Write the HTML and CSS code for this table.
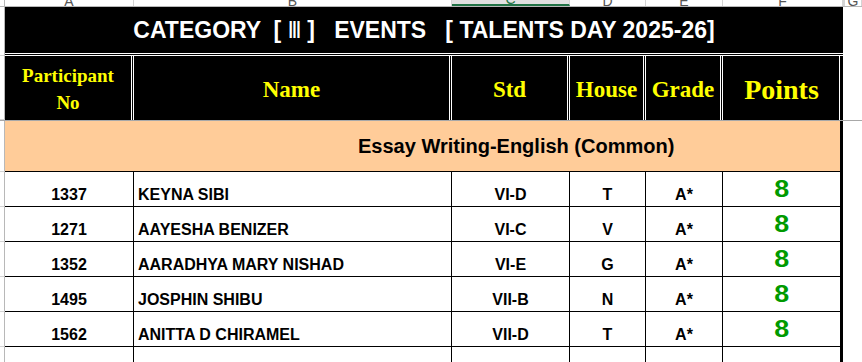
FILE: index.html
```html
<!DOCTYPE html>
<html>
<head>
<meta charset="utf-8">
<link rel="stylesheet" href="styles.css">
</head>
<body>
<div class="sheet">
  <div class="colbar">
    <div class="ch corner"></div>
    <div class="ch"><span>A</span></div>
    <div class="ch"><span>B</span></div>
    <div class="ch sel"><span>C</span></div>
    <div class="ch"><span>D</span></div>
    <div class="ch"><span>E</span></div>
    <div class="ch"><span>F</span></div>
    <div class="ch last"><span>G</span></div>
  </div>

  <div class="row title-row">
    <div class="rh"></div>
    <div class="title">CATEGORY  [ <span class="roman">III</span> ]   EVENTS   [ TALENTS DAY 2025-26]</div>
    <div class="fill"></div>
  </div>

  <div class="row hdr-row">
    <div class="rh"></div>
    <div class="hc hc-part"><span>Participant<br>No</span></div>
    <div class="hc">Name</div>
    <div class="hc">Std</div>
    <div class="hc">House</div>
    <div class="hc">Grade</div>
    <div class="hc hc-points">Points</div>
    <div class="fill"></div>
  </div>

  <div class="row event-row">
    <div class="rh"></div>
    <div class="event">Essay Writing-English (Common)</div>
    <div class="fill"></div>
  </div>

  <div class="row data-row">
    <div class="rh"></div>
    <div class="dc num">1337</div>
    <div class="dc name">KEYNA SIBI</div>
    <div class="dc">VI-D</div>
    <div class="dc">T</div>
    <div class="dc">A*</div>
    <div class="dc pts"><span>8</span></div>
    <div class="fill"></div>
  </div>
  <div class="row data-row">
    <div class="rh"></div>
    <div class="dc num">1271</div>
    <div class="dc name">AAYESHA BENIZER</div>
    <div class="dc">VI-C</div>
    <div class="dc">V</div>
    <div class="dc">A*</div>
    <div class="dc pts"><span>8</span></div>
    <div class="fill"></div>
  </div>
  <div class="row data-row">
    <div class="rh"></div>
    <div class="dc num">1352</div>
    <div class="dc name">AARADHYA MARY NISHAD</div>
    <div class="dc">VI-E</div>
    <div class="dc">G</div>
    <div class="dc">A*</div>
    <div class="dc pts"><span>8</span></div>
    <div class="fill"></div>
  </div>
  <div class="row data-row">
    <div class="rh"></div>
    <div class="dc num">1495</div>
    <div class="dc name">JOSPHIN SHIBU</div>
    <div class="dc">VII-B</div>
    <div class="dc">N</div>
    <div class="dc">A*</div>
    <div class="dc pts"><span>8</span></div>
    <div class="fill"></div>
  </div>
  <div class="row data-row">
    <div class="rh"></div>
    <div class="dc num">1562</div>
    <div class="dc name">ANITTA D CHIRAMEL</div>
    <div class="dc">VII-D</div>
    <div class="dc">T</div>
    <div class="dc">A*</div>
    <div class="dc pts"><span>8</span></div>
    <div class="fill"></div>
  </div>
  <div class="row data-row">
    <div class="rh"></div>
    <div class="dc num"></div>
    <div class="dc name"></div>
    <div class="dc"></div>
    <div class="dc"></div>
    <div class="dc"></div>
    <div class="dc pts"></div>
    <div class="fill"></div>
  </div>
</div>
</body>
</html>
```

FILE: styles.css
```css
* { box-sizing: border-box; margin: 0; padding: 0; }
html, body { background: #fff; }
body { margin: 0; font-family: "Liberation Sans", Arial, sans-serif; }

.sheet {
  width: 862px;
  height: 362px;
  overflow: hidden;
  background: #fff;
}

.colbar,
.row {
  display: grid;
  grid-template-columns: 5px 129px 318px 118px 76px 77px 120px 19px;
}

/* column header strip */
.colbar {
  height: 7px;
  border-bottom: 1px solid #b8b8b8;
}
.ch {
  height: 6px;
  overflow: hidden;
  display: flex;
  justify-content: center;
  align-items: flex-end;
  border-right: 1px solid #d4d4d4;
  font-family: "Liberation Sans", Arial, sans-serif;
  font-size: 14px;
  color: #555;
}
.ch span { line-height: 14px; margin-bottom: -2px; }
.ch.corner { border-right: 1px solid #b8b8b8; }
.ch.sel {
  background: #e1e1e1;
  color: #217346;
  border-bottom: 2px solid #217346;
}
.ch.last { border-left: 2px solid #d4d4d4; }

/* left row-header strip */
.rh {
  border-right: 1px solid #b8b8b8;
  border-bottom: 1px solid #d4d4d4;
}
.fill { background: #fff; }

/* title */
.title-row { height: 49px; }
.title {
  grid-column: 2 / 8;
  background: #000;
  color: #fff;
  border-bottom: 3px double #fff;
  font-family: "Liberation Sans", Arial, sans-serif;
  font-weight: bold;
  font-size: 23px;
  white-space: pre;
  display: flex;
  align-items: center;
  justify-content: center;
  padding-top: 1px;
}
.roman {
  font-weight: normal;
  font-size: 23px;
  letter-spacing: -2.6px;
  margin-right: 2px;
}

/* header */
.hdr-row {
  height: 65px;
  border-bottom: 1px solid #a8a8a8;
}
.hc {
  background: #000;
  color: #ffff00;
  border-right: 3px double #fff;
  font-family: "Liberation Serif", "Times New Roman", serif;
  font-weight: bold;
  font-size: 23px;
  display: flex;
  align-items: center;
  justify-content: center;
  text-align: center;
  padding-top: 3px;
}
.hc-part { font-size: 19px; line-height: 27px; padding-top: 2px; }
.hc-points {
  font-size: 28px;
  border-right: 3px solid #000;
  box-shadow: inset -1px 0 0 #fff;
}

/* event row */
.event-row { height: 51px; }
.event {
  grid-column: 2 / 8;
  background: #ffcc99;
  border-right: 3px solid #000;
  border-bottom: 1px solid #000;
  font-family: "Liberation Sans", Arial, sans-serif;
  font-weight: bold;
  font-size: 20px;
  display: flex;
  align-items: center;
  padding-left: 353px;
  padding-top: 1px;
}

/* data rows */
.data-row { height: 35px; }
.dc {
  border-right: 1px solid #000;
  border-bottom: 1px solid #000;
  font-family: "Liberation Sans", Arial, sans-serif;
  font-weight: bold;
  font-size: 16px;
  line-height: 16px;
  color: #000;
  display: flex;
  align-items: flex-end;
  justify-content: center;
  padding-bottom: 3px;
}
.dc.name { justify-content: flex-start; padding-left: 4px; }
.dc.pts {
  border-right: 3px solid #000;
  color: #009a00;
  font-size: 24px;
  line-height: 24px;
  align-items: center;
  padding-bottom: 0;
}
.dc.pts span { display: inline-block; transform: scaleX(1.12); }
```
